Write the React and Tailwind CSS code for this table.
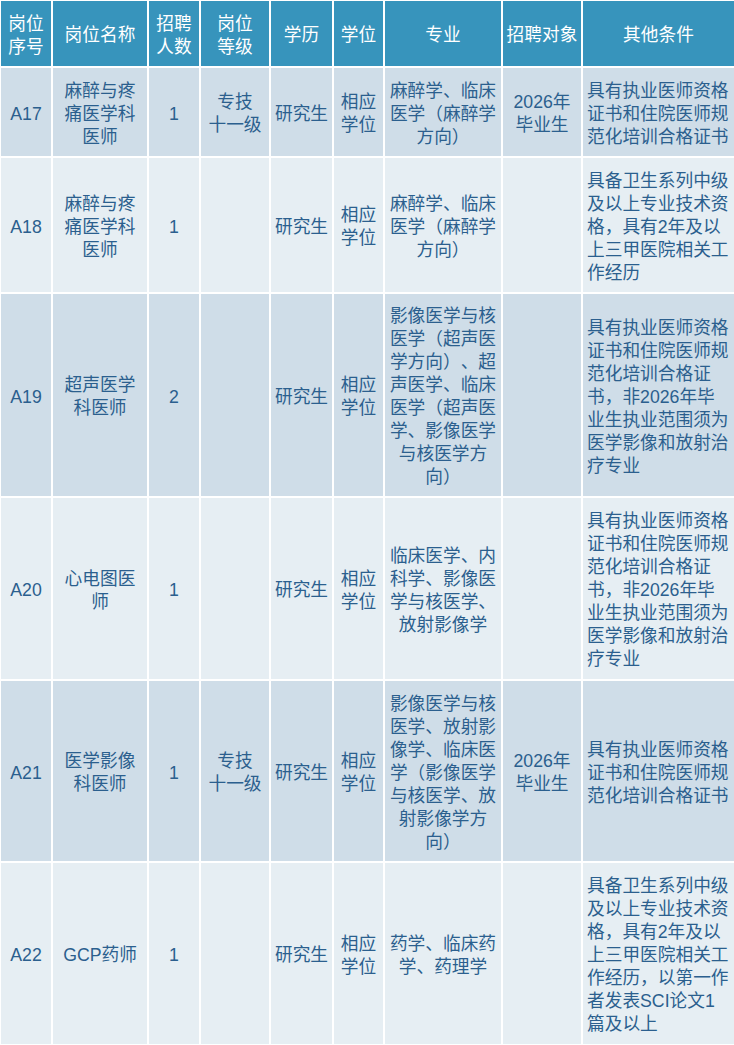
import React from "react";

const DARK = "bg-[#cfdde8]";
const LIGHT = "bg-[#e6eef3]";

const header = [
  ["岗位", "序号"],
  ["岗位名称"],
  ["招聘", "人数"],
  ["岗位", "等级"],
  ["学历"],
  ["学位"],
  ["专业"],
  ["招聘对象"],
  ["其他条件"],
];

const qual1 = ["具有执业医师资格", "证书和住院医师规", "范化培训合格证书"];
const qual2 = ["具备卫生系列中级", "及以上专业技术资", "格，具有2年及以", "上三甲医院相关工", "作经历"];
const qual3 = ["具有执业医师资格", "证书和住院医师规", "范化培训合格证", "书，非2026年毕", "业生执业范围须为", "医学影像和放射治", "疗专业"];
const qual4 = ["具备卫生系列中级", "及以上专业技术资", "格，具有2年及以", "上三甲医院相关工", "作经历，以第一作", "者发表SCI论文1", "篇及以上"];

const rows = [
  {
    bg: DARK,
    cells: [["A17"], ["麻醉与疼", "痛医学科", "医师"], ["1"], ["专技", "十一级"], ["研究生"], ["相应", "学位"], ["麻醉学、临床", "医学（麻醉学", "方向）"], ["2026年", "毕业生"], qual1],
  },
  {
    bg: LIGHT,
    cells: [["A18"], ["麻醉与疼", "痛医学科", "医师"], ["1"], [], ["研究生"], ["相应", "学位"], ["麻醉学、临床", "医学（麻醉学", "方向）"], [], qual2],
  },
  {
    bg: DARK,
    cells: [["A19"], ["超声医学", "科医师"], ["2"], [], ["研究生"], ["相应", "学位"], ["影像医学与核", "医学（超声医", "学方向）、超", "声医学、临床", "医学（超声医", "学、影像医学", "与核医学方", "向）"], [], qual3],
  },
  {
    bg: LIGHT,
    cells: [["A20"], ["心电图医", "师"], ["1"], [], ["研究生"], ["相应", "学位"], ["临床医学、内", "科学、影像医", "学与核医学、", "放射影像学"], [], qual3],
  },
  {
    bg: DARK,
    cells: [["A21"], ["医学影像", "科医师"], ["1"], ["专技", "十一级"], ["研究生"], ["相应", "学位"], ["影像医学与核", "医学、放射影", "像学、临床医", "学（影像医学", "与核医学、放", "射影像学方", "向）"], ["2026年", "毕业生"], qual1],
  },
  {
    bg: LIGHT,
    cells: [["A22"], ["GCP药师"], ["1"], [], ["研究生"], ["相应", "学位"], ["药学、临床药", "学、药理学"], [], qual4],
  },
];

function Cell({ lines, bg, left, text }) {
  return (
    <div className={`${bg} flex flex-col justify-center pt-[4px] ${left ? "items-start pl-[4px]" : "items-center"} ${text}`}>
      {lines.map((l, i) => (
        <div key={i} className="whitespace-nowrap">
          {l}
        </div>
      ))}
    </div>
  );
}

export default function App() {
  return (
    <div
      className="bg-white w-[734px] h-[1045px] overflow-hidden pl-[1px] pt-[1px] text-[17.7px] leading-[23px] [text-spacing-trim:space-all]"
      style={{ fontFamily: '"Liberation Sans", "Noto Sans CJK SC", sans-serif' }}
    >
      <div className="grid grid-cols-[50px_94px_50px_68px_61px_49px_116px_78px_151px] grid-rows-[65px_88px_134px_202px_181px_180px_181px] gap-[2px]">
        {header.map((h, i) => (
          <Cell key={"h" + i} lines={h} bg="bg-[#3794bc]" text="text-white" />
        ))}
        {rows.map((r, ri) =>
          r.cells.map((c, ci) => (
            <Cell key={ri + "-" + ci} lines={c} bg={r.bg} left={ci === 8} text="text-[#2b5f8e]" />
          ))
        )}
      </div>
    </div>
  );
}
